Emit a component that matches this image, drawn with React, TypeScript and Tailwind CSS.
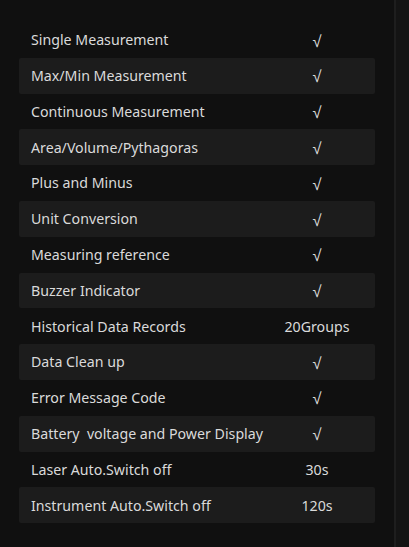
const rows: [string, string][] = [
  ["Single Measurement", "√"],
  ["Max/Min Measurement", "√"],
  ["Continuous Measurement", "√"],
  ["Area/Volume/Pythagoras", "√"],
  ["Plus and Minus", "√"],
  ["Unit Conversion", "√"],
  ["Measuring reference", "√"],
  ["Buzzer Indicator", "√"],
  ["Historical Data Records", "20Groups"],
  ["Data Clean up", "√"],
  ["Error Message Code", "√"],
  ["Battery  voltage and Power Display", "√"],
  ["Laser Auto.Switch off", "30s"],
  ["Instrument Auto.Switch off", "120s"],
];

export default function App() {
  return (
    <div className="flex h-[547px] w-[409px] bg-[#101010] font-['Noto_Sans',sans-serif] text-[#dadada]">
      <div className="w-[394px] pt-[22px] pl-[19px] pr-[19px]">
        {rows.map(([label, value], i) => (
          <div
            key={label}
            className={`flex h-[35.8px] items-center rounded-[2px] ${i % 2 === 1 ? "bg-[#1c1c1c]" : ""}`}
          >
            <span className="flex-1 whitespace-pre pl-[12px] text-[14.2px]">{label}</span>
            {value === "√" ? (
              <span className="w-[92px] pr-[24px] pt-[2px] text-center text-[16.5px]">{value}</span>
            ) : (
              <span className="w-[92px] pr-[24px] text-center text-[14.2px]">{value}</span>
            )}
          </div>
        ))}
      </div>
      <div className="w-[2px] bg-[#1e1e1e]" />
      <div className="flex-1 bg-[#141414]" />
    </div>
  );
}
